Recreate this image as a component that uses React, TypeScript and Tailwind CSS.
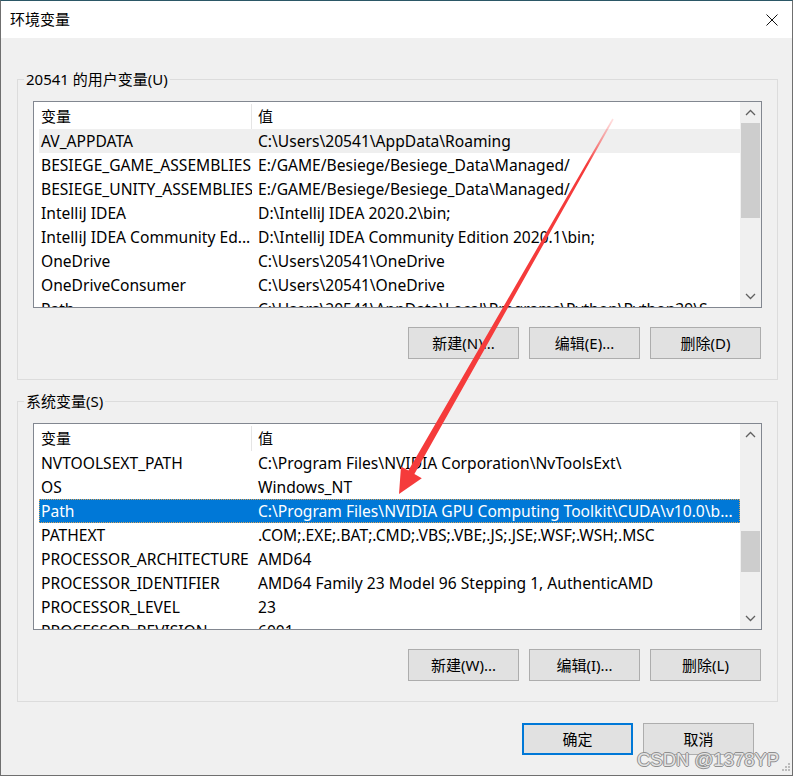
import React from "react";

type EnvVar = { name: string; value: string };

const userVars: EnvVar[] = [
  { name: "AV_APPDATA", value: "C:\\Users\\20541\\AppData\\Roaming" },
  { name: "BESIEGE_GAME_ASSEMBLIES", value: "E:/GAME/Besiege/Besiege_Data\\Managed/" },
  { name: "BESIEGE_UNITY_ASSEMBLIES", value: "E:/GAME/Besiege/Besiege_Data\\Managed/" },
  { name: "IntelliJ IDEA", value: "D:\\IntelliJ IDEA 2020.2\\bin;" },
  { name: "IntelliJ IDEA Community Ed...", value: "D:\\IntelliJ IDEA Community Edition 2020.1\\bin;" },
  { name: "OneDrive", value: "C:\\Users\\20541\\OneDrive" },
  { name: "OneDriveConsumer", value: "C:\\Users\\20541\\OneDrive" },
  { name: "Path", value: "C:\\Users\\20541\\AppData\\Local\\Programs\\Python\\Python39\\S..." },
];

const systemVars: EnvVar[] = [
  { name: "NVTOOLSEXT_PATH", value: "C:\\Program Files\\NVIDIA Corporation\\NvToolsExt\\" },
  { name: "OS", value: "Windows_NT" },
  { name: "Path", value: "C:\\Program Files\\NVIDIA GPU Computing Toolkit\\CUDA\\v10.0\\b..." },
  { name: "PATHEXT", value: ".COM;.EXE;.BAT;.CMD;.VBS;.VBE;.JS;.JSE;.WSF;.WSH;.MSC" },
  { name: "PROCESSOR_ARCHITECTURE", value: "AMD64" },
  { name: "PROCESSOR_IDENTIFIER", value: "AMD64 Family 23 Model 96 Stepping 1, AuthenticAMD" },
  { name: "PROCESSOR_LEVEL", value: "23" },
  { name: "PROCESSOR_REVISION", value: "6001" },
];

function Chevron({ up }: { up?: boolean }) {
  return (
    <svg width="21" height="21" viewBox="0 0 21 21">
      <polyline
        points={up ? "6,13 10.5,8.5 15,13" : "6,8 10.5,12.5 15,8"}
        fill="none"
        stroke="#606060"
        strokeWidth="1.3"
      />
    </svg>
  );
}

function Scrollbar({ offset, size }: { offset: number; size: number }) {
  return (
    <div className="w-[21px] shrink-0 flex flex-col bg-[#f0f0f0]">
      <div className="h-[21px] flex items-center justify-center">
        <Chevron up />
      </div>
      <div className="flex-1 px-[1px]">
        <div className="bg-[#cdcdcd]" style={{ marginTop: offset, height: size }} />
      </div>
      <div className="h-[21px] flex items-center justify-center">
        <Chevron />
      </div>
    </div>
  );
}

function VarList({
  rows,
  selected,
  focused,
  thumbOffset,
  thumbSize,
}: {
  rows: EnvVar[];
  selected: number;
  focused: boolean;
  thumbOffset: number;
  thumbSize: number;
}) {
  return (
    <div className="h-[207px] border border-[#828790] bg-white flex">
      <div className="flex-1 min-w-0 flex flex-col overflow-hidden">
        <div className="h-[27px] flex items-center shrink-0 pt-[1px]">
          <div className="w-[217px] pl-[7px] text-[15px]">变量</div>
          <div className="w-px h-[25px] bg-[#e5e5e5]" />
          <div className="pl-[6px] text-[15px]">值</div>
        </div>
        <div className="flex flex-col pl-[5px]">
          {rows.map((r, i) => {
            const sel = i === selected;
            const cls = sel
              ? focused
                ? "bg-[#0078d7] text-white outline outline-1 outline-dotted outline-[#d9a35a] -outline-offset-1"
                : "bg-[#efefef]"
              : "";
            return (
              <div key={r.name + i} className={`h-[24px] shrink-0 flex items-center pt-[2px] whitespace-nowrap ${cls}`}>
                <div className="w-[213px] shrink-0 pl-[2px] overflow-hidden">{r.name}</div>
                <div className="flex-1 min-w-0 pl-[6px] overflow-hidden">{r.value}</div>
              </div>
            );
          })}
        </div>
      </div>
      <Scrollbar offset={thumbOffset} size={thumbSize} />
    </div>
  );
}

function Btn({ label, primary }: { label: string; primary?: boolean }) {
  return (
    <div
      className={`w-[111px] h-[32px] flex items-center justify-center pt-[1px] bg-[#e1e1e1] text-[15px] ${
        primary ? "border-2 border-[#0078d7]" : "border border-[#adadad]"
      }`}
    >
      {label}
    </div>
  );
}

function Group({
  title,
  rows,
  selected,
  focused,
  thumbOffset,
  thumbSize,
  buttons,
  className,
}: {
  title: string;
  rows: EnvVar[];
  selected: number;
  focused: boolean;
  thumbOffset: number;
  thumbSize: number;
  buttons: string[];
  className: string;
}) {
  return (
    <fieldset className={`w-[761px] min-w-0 border border-[#dcdcdc] p-0 ${className}`}>
      <legend className="ml-[6px] px-[2px] leading-[20px] text-[15px]">{title}</legend>
      <div className="px-[15px] pt-[12px] pb-[20px]">
        <VarList
          rows={rows}
          selected={selected}
          focused={focused}
          thumbOffset={thumbOffset}
          thumbSize={thumbSize}
        />
        <div className="mt-[19px] flex justify-end gap-[10px] pr-[1px]">
          {buttons.map((b) => (
            <Btn key={b} label={b} />
          ))}
        </div>
      </div>
    </fieldset>
  );
}

export default function App() {
  return (
    <div className="relative w-[793px] h-[776px] bg-[#f0f0f0] border border-[#6f6f6f] border-t-[#2b5766] text-[15.6px] text-black font-['Noto_Sans','Noto_Sans_CJK_SC',sans-serif] overflow-hidden">
      {/* title bar */}
      <div className="h-[37px] bg-white flex items-center justify-between pl-[9px] pr-[14px]">
        <span className="text-[15px]">环境变量</span>
        <svg width="12" height="12" viewBox="0 0 12 12">
          <path d="M0.5 0.5 L11.5 11.5 M11.5 0.5 L0.5 11.5" stroke="#111" strokeWidth="1" />
        </svg>
      </div>

      <div className="pl-[16px]">
        <Group
          title="20541 的用户变量(U)"
          rows={userVars}
          selected={0}
          focused={false}
          thumbOffset={0}
          thumbSize={95}
          buttons={["新建(N)...", "编辑(E)...", "删除(D)"]}
          className="mt-[31px]"
        />
        <Group
          title="系统变量(S)"
          rows={systemVars}
          selected={2}
          focused={true}
          thumbOffset={86}
          thumbSize={41}
          buttons={["新建(W)...", "编辑(I)...", "删除(L)"]}
          className="mt-[11px]"
        />
      </div>

      <div className="mt-[21px] flex justify-end gap-[10px] pr-[38px]">
        <Btn label="确定" primary />
        <Btn label="取消" />
      </div>

      {/* red annotation arrow */}
      <svg className="absolute left-0 top-0 pointer-events-none" width="794" height="777" viewBox="0 0 794 777">
        <defs>
          <linearGradient id="arrowFade" x1="612" y1="118" x2="398" y2="493" gradientUnits="userSpaceOnUse">
            <stop offset="0" stopColor="#ff6b6b" stopOpacity="0.2" />
            <stop offset="0.12" stopColor="#f53b3b" />
            <stop offset="1" stopColor="#f53b3b" />
          </linearGradient>
        </defs>
        <polygon
          points="611.3,117.6 612.7,118.4 413.4,473 420.8,477.2 398,493 400,465.4 407.4,469.6"
          fill="url(#arrowFade)"
        />
      </svg>

      {/* watermark */}
      <div className="absolute left-[636px] top-[747px] leading-[24px] text-[18.5px] font-['Liberation_Sans',sans-serif] text-white/75 [text-shadow:1px_0_0_#8f8f8f,-1px_0_0_#8f8f8f,0_1px_0_#8f8f8f,0_-1px_0_#8f8f8f] pointer-events-none">
        CSDN @1378YP
      </div>

      {/* size grip */}
      <svg className="absolute right-[1px] bottom-[3px]" width="9" height="9" viewBox="0 0 9 9">
        <rect x="6" y="0" width="2" height="2" fill="#bcbcbc" />
        <rect x="3" y="3" width="2" height="2" fill="#bcbcbc" />
        <rect x="6" y="3" width="2" height="2" fill="#bcbcbc" />
        <rect x="0" y="6" width="2" height="2" fill="#bcbcbc" />
        <rect x="3" y="6" width="2" height="2" fill="#bcbcbc" />
        <rect x="6" y="6" width="2" height="2" fill="#bcbcbc" />
      </svg>
    </div>
  );
}
